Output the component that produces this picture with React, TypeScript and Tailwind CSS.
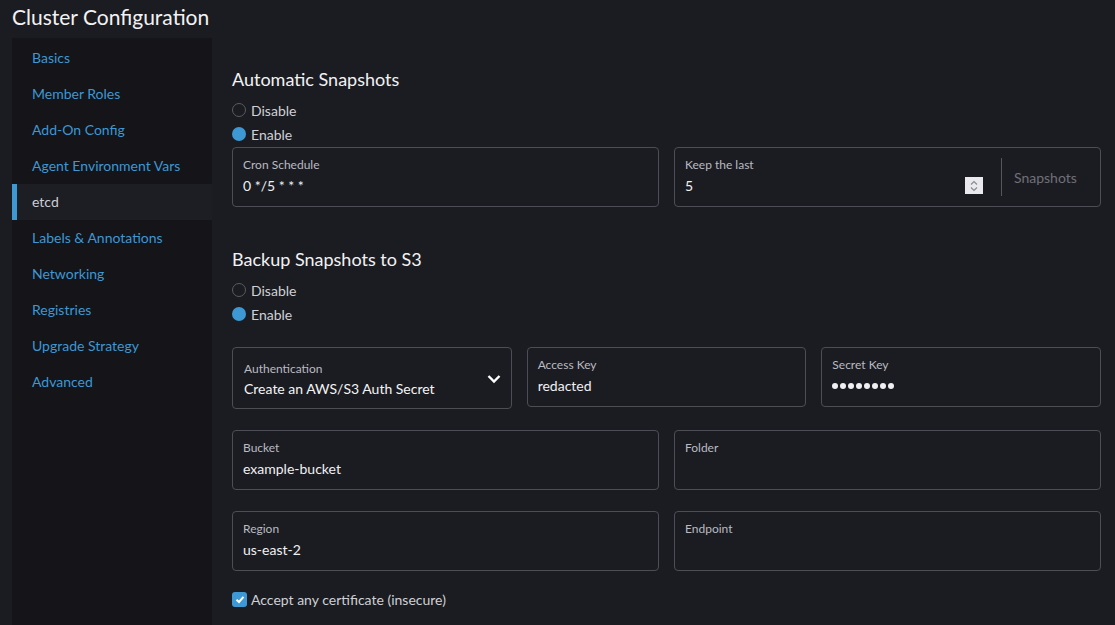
import React from "react";

const navItems = [
  "Basics",
  "Member Roles",
  "Add-On Config",
  "Agent Environment Vars",
  "etcd",
  "Labels & Annotations",
  "Networking",
  "Registries",
  "Upgrade Strategy",
  "Advanced",
];

function Radio({ label, checked }: { label: string; checked?: boolean }) {
  return (
    <div className="flex items-center h-[24px]">
      {checked ? (
        <span className="w-[14px] h-[14px] rounded-full bg-[#3d98d3]" />
      ) : (
        <span className="w-[14px] h-[14px] rounded-full border border-[#5a5b62]" />
      )}
      <span className="ml-[5px] text-[14px] text-[#cfd0d6]">{label}</span>
    </div>
  );
}

function Field({
  label,
  value,
  className = "",
  children,
}: {
  label: string;
  value?: string;
  className?: string;
  children?: React.ReactNode;
}) {
  return (
    <div
      className={
        "relative h-[60px] rounded-[4px] border border-[#4d4e55] pl-[10px] pr-[10px] pt-[9px] " +
        className
      }
    >
      <div className="text-[12px] leading-[16px] text-[#b9bac2]">{label}</div>
      {value !== undefined && (
        <div className="mt-[3px] text-[14px] leading-[20px] text-[#f0f0f3]">{value}</div>
      )}
      {children}
    </div>
  );
}

export default function App() {
  return (
    <div
      className="w-[1115px] h-[625px] overflow-hidden bg-[#1b1c21] flex flex-col"
      style={{ fontFamily: "Lato, 'Open Sans', sans-serif" }}
    >
      <div className="h-[38px] shrink-0 pl-[12px] text-[21px] leading-[33px] text-[#f2f2f4]">
        Cluster Configuration
      </div>
      <div className="flex flex-1 min-h-0">
        <div className="ml-[12px] w-[200px] shrink-0 bg-[#141419] pt-[2px]">
          {navItems.map((item) => {
            const active = item === "etcd";
            return (
              <div
                key={item}
                className={
                  "h-[36px] pb-[2px] flex items-center text-[14px] " +
                  (active
                    ? "bg-[#1d1e24] border-l-[5px] border-[#3d98d3] pl-[15px] text-[#cdced4]"
                    : "pl-[20px] text-[#3d98d3]")
                }
              >
                {item}
              </div>
            );
          })}
        </div>
        <div className="flex-1 pl-[20px] pr-[14px] pt-[29px]">
          <div className="text-[18px] leading-[24px] text-[#f2f2f4]">Automatic Snapshots</div>
          <div className="mt-[7px]">
            <Radio label="Disable" />
            <Radio label="Enable" checked />
          </div>
          <div className="mt-[1px] grid grid-cols-2 gap-[15px]">
            <Field label="Cron Schedule" value="0 */5 * * *" />
            <div className="h-[60px] rounded-[4px] border border-[#4d4e55] flex">
              <div className="flex-1 pl-[10px] pt-[9px] relative">
                <div className="text-[12px] leading-[16px] text-[#b9bac2]">Keep the last</div>
                <div className="mt-[3px] text-[14px] leading-[20px] text-[#f0f0f3]">5</div>
                <div className="absolute right-[18px] top-[29px] w-[18px] h-[17px] bg-[#e9e9ee] flex flex-col items-center justify-center">
                  <svg width="8" height="12" viewBox="0 0 8 12" fill="none">
                    <path d="M1 4.5 L4 1.5 L7 4.5" stroke="#8a8a92" strokeWidth="1.2" />
                    <path d="M1 7.5 L4 10.5 L7 7.5" stroke="#8a8a92" strokeWidth="1.2" />
                  </svg>
                </div>
              </div>
              <div className="my-[10px] w-[1px] bg-[#55565d]" />
              <div className="w-[98px] flex items-center pl-[12px] text-[14px] text-[#6f7078]">
                Snapshots
              </div>
            </div>
          </div>

          <div className="mt-[40px] text-[18px] leading-[24px] text-[#f2f2f4]">
            Backup Snapshots to S3
          </div>
          <div className="mt-[7px]">
            <Radio label="Disable" />
            <Radio label="Enable" checked />
          </div>
          <div className="mt-[21px] grid grid-cols-3 gap-[15px] items-start">
            <div className="relative h-[62px] rounded-[4px] border border-[#4d4e55] pl-[11px] pt-[13px]">
              <div className="text-[12px] leading-[16px] text-[#b9bac2]">Authentication</div>
              <div className="mt-[2px] text-[14px] leading-[20px] text-[#f4f4f6]">
                Create an AWS/S3 Auth Secret
              </div>
              <svg
                className="absolute right-[10px] top-[26px]"
                width="14"
                height="10"
                viewBox="0 0 14 10"
                fill="none"
              >
                <path d="M1.5 2 L7 7.5 L12.5 2" stroke="#ffffff" strokeWidth="2.4" />
              </svg>
            </div>
            <Field label="Access Key" value="redacted" />
            <Field label="Secret Key">
              <div className="mt-[3px] flex gap-[2px] h-[20px] items-center">
                {Array.from({ length: 8 }).map((_, i) => (
                  <span key={i} className="w-[6px] h-[6px] rounded-full bg-[#f0f0f3]" />
                ))}
              </div>
            </Field>
          </div>
          <div className="mt-[21px] grid grid-cols-2 gap-[15px]">
            <Field label="Bucket" value="example-bucket" />
            <Field label="Folder" />
          </div>
          <div className="mt-[21px] grid grid-cols-2 gap-[15px]">
            <Field label="Region" value="us-east-2" />
            <Field label="Endpoint" />
          </div>
          <div className="mt-[20px] flex items-center h-[16px]">
            <span className="w-[15px] h-[15px] rounded-[3px] bg-[#3d98d3] flex items-center justify-center">
              <svg width="10" height="9" viewBox="0 0 10 9" fill="none">
                <path d="M1.5 4.8 L4 7 L8.5 1.8" stroke="#ffffff" strokeWidth="2" />
              </svg>
            </span>
            <span className="ml-[4px] text-[14px] text-[#cfd0d6]">
              Accept any certificate (insecure)
            </span>
          </div>
        </div>
      </div>
    </div>
  );
}
